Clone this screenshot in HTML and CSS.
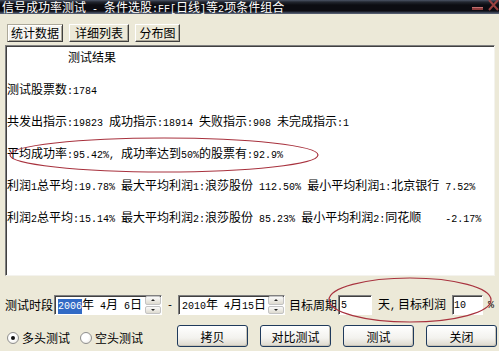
FILE: index.html
```html
<!DOCTYPE html>
<html lang="zh-CN">
<head>
<meta charset="utf-8">
<title>信号成功率测试</title>
<link rel="stylesheet" href="styles.css">
</head>
<body>
<div class="win">
  <div class="titlebar">
    <span class="title">信号成功率测试<span class="n"> - </span>条件选股<span class="n">:FF[</span>日线<span class="n">]</span>等<span class="n">2</span>项条件组合</span>
    <svg class="capbtns" width="27" height="14" viewBox="0 0 27 14">
      <rect x="0" y="7" width="11" height="3" fill="#8e3c3c"/>
      <rect x="0" y="7" width="11" height="1" fill="#c07070"/>
      <path d="M17 0 L26 10 M26 0 L17 10" stroke="#9a4040" stroke-width="2"/>
    </svg>
  </div>

  <div class="tabs">
    <div class="tab on t1">统计数据</div>
    <div class="tab t2">详细列表</div>
    <div class="tab t3">分布图</div>
  </div>

  <div class="panel">
    <p class="line head">测试结果</p>
    <p class="line">测试股票数<span class="n">:1784</span></p>
    <p class="line">共发出指示<span class="n">:19823 </span>成功指示<span class="n">:18914 </span>失败指示<span class="n">:908 </span>未完成指示<span class="n">:1</span></p>
    <p class="line">平均成功率<span class="n">:95.42%, </span>成功率达到<span class="n">50%</span>的股票有<span class="n">:92.9%</span></p>
    <p class="line">利润<span class="n">1</span>总平均<span class="n">:19.78% </span>最大平均利润<span class="n">1:</span>浪莎股份<span class="n"> 112.50% </span>最小平均利润<span class="n">1:</span>北京银行<span class="n"> 7.52%</span></p>
    <p class="line">利润<span class="n">2</span>总平均<span class="n">:15.14% </span>最大平均利润<span class="n">2:</span>浪莎股份<span class="n"> 85.23% </span>最小平均利润<span class="n">2:</span>同花顺<span class="n">    -2.17%</span></p>
  </div>

  <div class="row r1">
    <span class="lbl">测试时段</span>
    <div class="field date d1">
      <span class="val"><span class="sel n">2006</span>年<span class="n"> 4</span>月<span class="n"> 6</span>日</span>
      <span class="spin"><span class="up"></span><span class="dn"></span></span>
    </div>
    <span class="n dash">-</span>
    <div class="field date d2">
      <span class="val"><span class="n">2010</span>年<span class="n"> 4</span>月<span class="n">15</span>日</span>
      <span class="spin"><span class="up"></span><span class="dn"></span></span>
    </div>
    <span class="lbl l2">目标周期</span>
    <div class="field small f5"><span class="n">5</span></div>
    <span class="lbl l3">天<span class="n cm">,</span>目标利润</span>
    <div class="field small f10"><span class="n">10</span></div>
    <span class="n pct">%</span>
  </div>

  <div class="row r2">
    <label class="radio"><span class="dot on"></span>多头测试</label>
    <label class="radio r-b"><span class="dot"></span>空头测试</label>
    <div class="btns">
      <button class="btn">拷贝</button>
      <button class="btn">对比测试</button>
      <button class="btn">测试</button>
      <button class="btn">关闭</button>
    </div>
  </div>

  <svg class="marks" width="499" height="351" viewBox="0 0 499 351">
    <ellipse cx="164" cy="155" rx="154" ry="17" fill="none" stroke="#a8323e" stroke-width="1.2"/>
    <ellipse cx="410" cy="300" rx="81" ry="22" fill="none" stroke="#a8323e" stroke-width="1.2"/>
  </svg>
</div>
</body>
</html>
```

FILE: styles.css
```css
html, body {
  margin: 0;
  padding: 0;
}
body {
  width: 499px;
  height: 351px;
  overflow: hidden;
  background: #ece9d8;
  font: 12px "Noto Sans CJK SC", sans-serif;
  color: #000;
}
.win {
  position: relative;
  width: 499px;
  height: 351px;
}
.n {
  font-family: "Liberation Mono", monospace;
  font-size: 10px;
  white-space: pre;
}

/* title bar */
.titlebar {
  height: 14px;
  display: flex;
  justify-content: space-between;
  align-items: flex-start;
  background: linear-gradient(#4c5466 0, #22262f 2px, #0c0c12 5px, #0c0c12 11px, #2b3242 12px, #5d667a 14px);
}
.title {
  color: #fff;
  box-sizing: border-box;
  height: 14px;
  padding: 1px 0 0 2px;
  line-height: 12px;
  white-space: nowrap;
}
.capbtns {
  flex: none;
}

/* tabs */
.tabs {
  display: flex;
  gap: 6px;
  padding: 10px 0 0 7px;
}
.tab {
  box-sizing: border-box;
  height: 18px;
  line-height: 16px;
  text-align: center;
  border: 1px solid;
  border-color: #fff #404040 #404040 #fff;
  box-shadow: inset -1px -1px #aca899;
  background: #ece9d8;
}
.tab.on {
  background: #f6f5f0;
  border-color: #aca899 #404040 #404040 #aca899;
  box-shadow: inset 1px 1px #fff, inset -1px -1px #aca899;
}
.t1 { width: 56px; }
.t2 { width: 60px; }
.t3 { width: 45px; }

/* result panel */
.panel {
  box-sizing: border-box;
  margin: 3px 0 0 5px;
  width: 490px;
  height: 231px;
  padding: 1px 0 0 1px;
  background: #fff;
  border: 1px solid;
  border-color: #808080 #f4f3ee #f4f3ee #808080;
  box-shadow: inset 1px 1px #404040;
}
.line {
  margin: 0 0 12px;
  height: 20px;
  line-height: 20px;
  white-space: nowrap;
}
.line.head {
  padding-left: 61px;
}

/* rows */
.row {
  display: flex;
  align-items: center;
  white-space: nowrap;
}
.r1 {
  margin-top: 19px;
  height: 20px;
  padding-left: 5px;
}
.lbl { line-height: 20px; }
.field {
  box-sizing: border-box;
  height: 20px;
  background: #fff;
  border: 1px solid;
  border-color: #808080 #fff #fff #808080;
  box-shadow: inset 1px 1px #404040;
  display: flex;
  align-items: center;
}
.date { margin-left: 1px; }
.d1 { width: 108px; }
.d2 { width: 107px; }
.val {
  flex: 1;
  padding-left: 3px;
  line-height: 16px;
}
.sel {
  background: #316ac5;
  color: #fff;
  display: inline-block;
  line-height: 15px;
}
.spin {
  width: 16px;
  height: 18px;
  display: flex;
  flex-direction: column;
  gap: 1px;
}
.spin span {
  flex: 1;
  box-sizing: border-box;
  border: 1px solid #c3c3c3;
  border-radius: 2px;
  background: linear-gradient(#fafafa, #dedbd0);
  display: flex;
  align-items: center;
  justify-content: center;
}
.spin .up::after {
  content: "";
  border: 2px solid transparent;
  border-bottom: 2px solid #222;
  border-top-width: 0;
}
.spin .dn::after {
  content: "";
  border: 2px solid transparent;
  border-top: 2px solid #222;
  border-bottom-width: 0;
}
.dash { margin: 0 4px 0 5px; }
.l2 { margin-left: 4px; }
.small { padding-left: 2px; }
.f5 { width: 34px; margin-left: 1px; }
.l3 { margin-left: 6px; }
.cm { margin-right: 2px; }
.f10 { width: 31px; margin-left: 6px; padding-left: 1px; }
.pct { margin-left: 5px; }

.r2 {
  margin-top: 10px;
  height: 22px;
  padding-left: 7px;
}
.radio {
  display: flex;
  align-items: center;
  gap: 3px;
  margin-top: 3px;
}
.r-b { margin-left: 10px; }
.dot {
  box-sizing: border-box;
  width: 12px;
  height: 12px;
  border-radius: 50%;
  border: 1px solid #8f8f8f;
  background: radial-gradient(circle at 40% 40%, #fff 40%, #e4e2da);
  display: flex;
  align-items: center;
  justify-content: center;
}
.dot.on::after {
  content: "";
  width: 4px;
  height: 4px;
  border-radius: 50%;
  background: #111;
}
.btns {
  display: flex;
  gap: 12px;
  margin-left: 34px;
}
.btn {
  box-sizing: border-box;
  width: 71px;
  height: 22px;
  padding: 0;
  font: 12px "Noto Sans CJK SC", sans-serif;
  color: #000;
  border: 1px solid #1f3a5c;
  border-radius: 3px;
  background: linear-gradient(#ffffff, #f3f2ee 60%, #dcd8cc);
  box-shadow: inset -1px -1px #c9c5b8;
}

/* hand-drawn annotation marks */
.marks {
  position: absolute;
  left: 0;
  top: 0;
  pointer-events: none;
}
```
